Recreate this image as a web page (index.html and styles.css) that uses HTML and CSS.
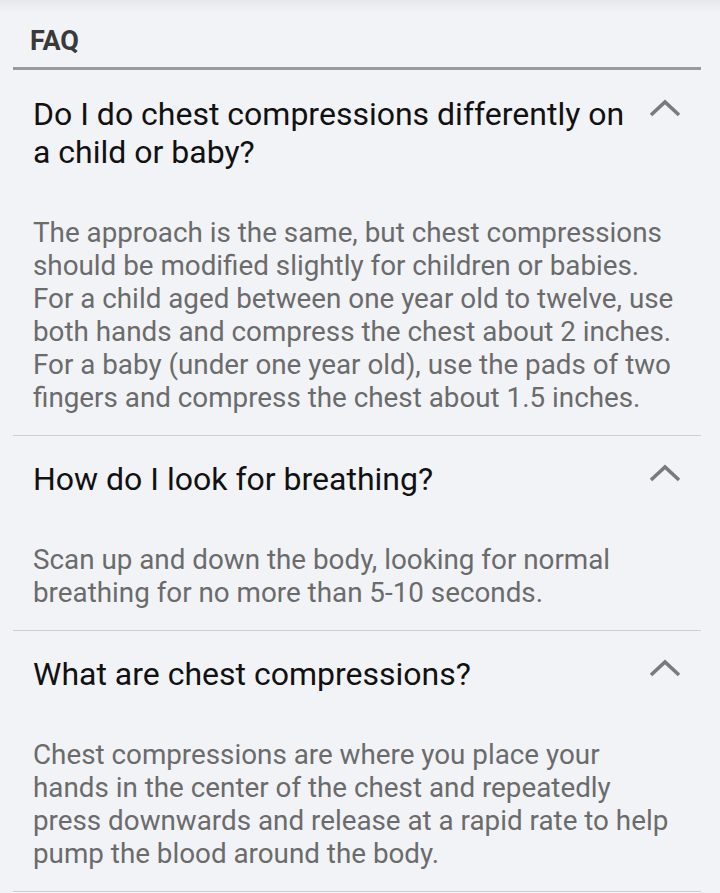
FILE: index.html
```html
<!DOCTYPE html>
<html>
<head>
<meta charset="utf-8">
<link rel="stylesheet" href="styles.css">
</head>
<body>
<div class="page">
  <div class="faq-title">FAQ</div>
  <div class="faq-list">
    <div class="faq-item">
      <div class="faq-q">
        <div class="q-text">Do I do chest compressions differently on a child or baby?</div>
        <svg class="chev" width="32" height="20" viewBox="0 0 32 20"><path d="M2 17 L16 4 L30 17" fill="none" stroke="#7a7a7a" stroke-width="3.6"/></svg>
      </div>
      <div class="faq-a">The approach is the same, but chest compressions should be modified slightly for children or babies. For a child aged between one year old to twelve, use both hands and compress the chest about 2 inches. For a baby (under one year old), use the pads of two fingers and compress the chest about 1.5 inches.</div>
    </div>
    <div class="faq-item">
      <div class="faq-q">
        <div class="q-text">How do I look for breathing?</div>
        <svg class="chev" width="32" height="20" viewBox="0 0 32 20"><path d="M2 17 L16 4 L30 17" fill="none" stroke="#7a7a7a" stroke-width="3.6"/></svg>
      </div>
      <div class="faq-a">Scan up and down the body, looking for normal breathing for no more than 5-10 seconds.</div>
    </div>
    <div class="faq-item">
      <div class="faq-q">
        <div class="q-text">What are chest compressions?</div>
        <svg class="chev" width="32" height="20" viewBox="0 0 32 20"><path d="M2 17 L16 4 L30 17" fill="none" stroke="#7a7a7a" stroke-width="3.6"/></svg>
      </div>
      <div class="faq-a">Chest compressions are where you place your hands in the center of the chest and repeatedly press downwards and release at a rapid rate to help pump the blood around the body.</div>
    </div>
  </div>
</div>
</body>
</html>
```

FILE: styles.css
```css
html, body {
  margin: 0;
  padding: 0;
  background: #f2f3f7;
}
body {
  font-family: Roboto, "Noto Sans", sans-serif;
  background: linear-gradient(#e6e7eb 0px, #f2f3f7 12px) no-repeat, #f2f3f7;
  min-height: 893px;
}
.page {
  margin-left: 13px;
  width: 688px;
  padding-top: 26px;
}
.faq-title {
  font-weight: 700;
  font-size: 27px;
  line-height: 30px;
  color: #3a3a3a;
  padding-left: 17px;
  padding-bottom: 11px;
  border-bottom: 3px solid #9a9a9e;
}
.faq-item {
  padding: 24px 21px 21px 20px;
  border-bottom: 1px solid #cfcfd3;
}
.faq-item:first-child {
  padding-top: 25px;
}
.faq-q {
  display: flex;
  align-items: flex-start;
  justify-content: space-between;
}
.q-text {
  font-size: 32px;
  line-height: 38px;
  color: #111;
  width: 615px;
}
.chev {
  margin-top: 3px;
  margin-right: -1px;
  flex: none;
}
.faq-a {
  margin-top: 45px;
  font-size: 27.8px;
  line-height: 33px;
  color: #6b6b6b;
}
```
